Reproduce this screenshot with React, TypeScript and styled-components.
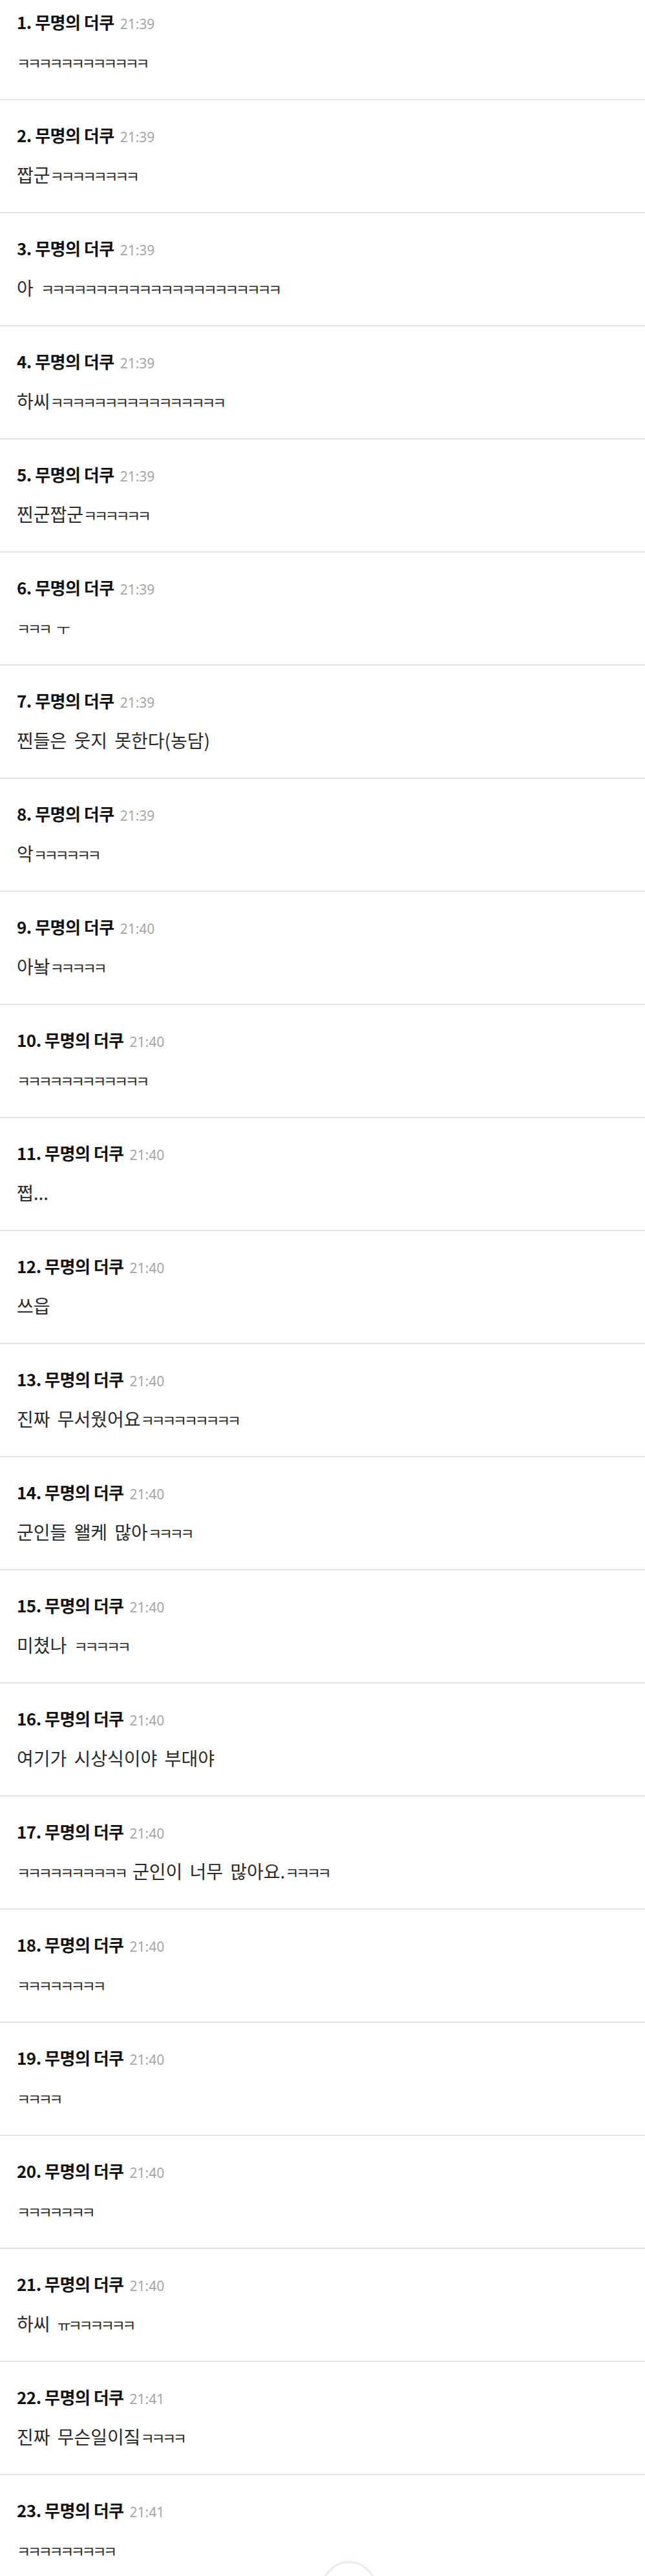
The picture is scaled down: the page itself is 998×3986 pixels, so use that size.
import styled, { createGlobalStyle } from "styled-components";

const GlobalStyle = createGlobalStyle`
    html, body {
        margin: 0;
        padding: 0;
        background: #ffffff;
    }
    body {
        font-family: "Noto Sans CJK KR", "Noto Sans", sans-serif;
        -webkit-font-smoothing: antialiased;
    }
`;

type Comment = { time: string; text: string };

const comments: Comment[] = [
    { time: "21:39", text: "ㅋㅋㅋㅋㅋㅋㅋㅋㅋㅋㅋㅋ" },
    { time: "21:39", text: "짭군ㅋㅋㅋㅋㅋㅋㅋㅋ" },
    { time: "21:39", text: "아 ㅋㅋㅋㅋㅋㅋㅋㅋㅋㅋㅋㅋㅋㅋㅋㅋㅋㅋㅋㅋㅋㅋ" },
    { time: "21:39", text: "하씨ㅋㅋㅋㅋㅋㅋㅋㅋㅋㅋㅋㅋㅋㅋㅋㅋ" },
    { time: "21:39", text: "찐군짭군ㅋㅋㅋㅋㅋㅋ" },
    { time: "21:39", text: "ㅋㅋㅋ ㅜ" },
    { time: "21:39", text: "찐들은 웃지 못한다(농담)" },
    { time: "21:39", text: "악ㅋㅋㅋㅋㅋㅋ" },
    { time: "21:40", text: "아놬ㅋㅋㅋㅋㅋ" },
    { time: "21:40", text: "ㅋㅋㅋㅋㅋㅋㅋㅋㅋㅋㅋㅋ" },
    { time: "21:40", text: "쩝..." },
    { time: "21:40", text: "쓰읍" },
    { time: "21:40", text: "진짜 무서웠어요ㅋㅋㅋㅋㅋㅋㅋㅋㅋ" },
    { time: "21:40", text: "군인들 왤케 많아ㅋㅋㅋㅋ" },
    { time: "21:40", text: "미쳤나 ㅋㅋㅋㅋㅋ" },
    { time: "21:40", text: "여기가 시상식이야 부대야" },
    { time: "21:40", text: "ㅋㅋㅋㅋㅋㅋㅋㅋㅋㅋ 군인이 너무 많아요.ㅋㅋㅋㅋ" },
    { time: "21:40", text: "ㅋㅋㅋㅋㅋㅋㅋㅋ" },
    { time: "21:40", text: "ㅋㅋㅋㅋ" },
    { time: "21:40", text: "ㅋㅋㅋㅋㅋㅋㅋ" },
    { time: "21:40", text: "하씨 ㅠㅋㅋㅋㅋㅋㅋ" },
    { time: "21:41", text: "진짜 무슨일이짘ㅋㅋㅋㅋ" },
    { time: "21:41", text: "ㅋㅋㅋㅋㅋㅋㅋㅋㅋ" }
];

const Feed = styled.div`
    display: flex;
    flex-direction: column;
`;

const CommentItem = styled.article`
    padding: 36px 26px 40px;
    border-bottom: 2px solid #e4e4e4;

    /* list is scrolled a little past the top of the first comment */
    &:first-child {
        padding-top: 16px;
    }

    &:last-child {
        padding-bottom: 20px;
        border-bottom: none;
    }
`;

const Header = styled.div`
    display: flex;
    align-items: baseline;
    height: 36px;
    line-height: 36px;
`;

const Author = styled.span`
    font-size: 26px;
    font-weight: 700;
    color: #111111;
    letter-spacing: -0.5px;
`;

const Time = styled.span`
    margin-left: 9px;
    font-family: "Noto Sans", sans-serif;
    font-size: 21px;
    color: #a6a6a6;
`;

const Body = styled.p`
    margin: 25px 0 0;
    height: 36px;
    font-size: 28px;
    line-height: 36px;
    word-spacing: 5px;
    color: #2a2a2a;
    white-space: nowrap;
`;

// bare jamo (ㅋ, ㅜ, ㅠ) set tighter and smaller than full syllables
const Jamo = styled.span`
    font-size: 23px;
    letter-spacing: -4.4px;
    word-spacing: 4px;
`;

const TopButton = styled.button`
    position: fixed;
    left: 498px;
    bottom: -61px;
    width: 84px;
    height: 84px;
    border-radius: 50%;
    border: 3px solid #ececec;
    background: #ffffff;
    box-shadow: 0 0 6px rgba(0, 0, 0, 0.05);
    padding: 0;
`;

function CommentText({ text }: { text: string }) {
    const parts = text.split(/([ㄱ-ㅎㅏ-ㅣ]+)/);
    return (
        <>
            {parts.map((part, i) =>
                /^[ㄱ-ㅎㅏ-ㅣ]+$/.test(part) ? <Jamo key={i}>{part}</Jamo> : <span key={i}>{part}</span>
            )}
        </>
    );
}

export default function App() {
    return (
        <>
            <GlobalStyle />
            <Feed>
                {comments.map((c, i) => (
                    <CommentItem key={i}>
                        <Header>
                            <Author>{i + 1}. 무명의 더쿠</Author>
                            <Time>{c.time}</Time>
                        </Header>
                        <Body>
                            <CommentText text={c.text} />
                        </Body>
                    </CommentItem>
                ))}
            </Feed>
            <TopButton aria-label="맨 위로" />
        </>
    );
}
